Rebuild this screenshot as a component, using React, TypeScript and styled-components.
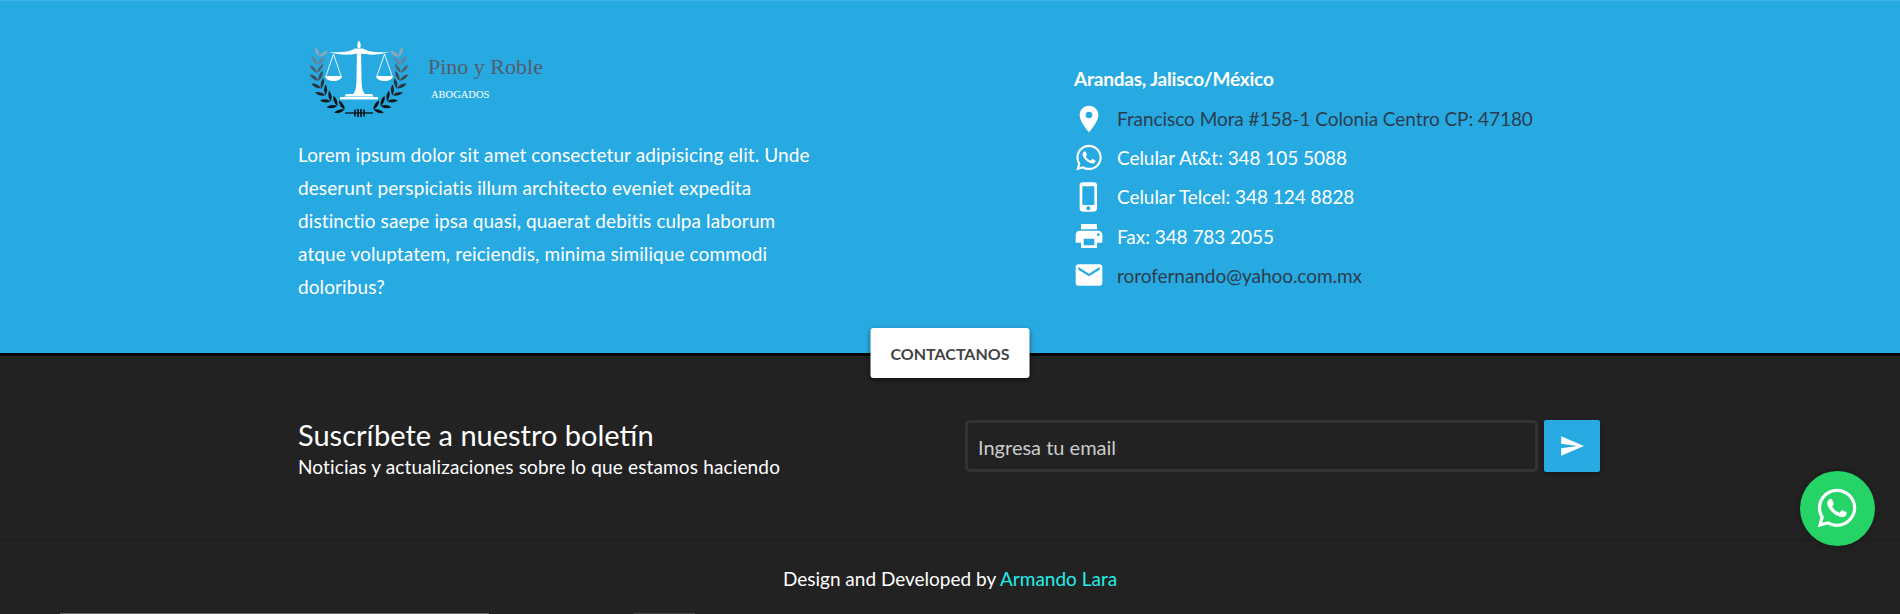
import React from 'react';
import styled, { createGlobalStyle } from 'styled-components';
import { FaWhatsapp } from 'react-icons/fa';
import { MdEmail, MdPhoneIphone, MdPlace, MdPrint, MdSend } from 'react-icons/md';

const GlobalStyle = createGlobalStyle`
  html, body {
    margin: 0;
    height: 100%;
    overflow: hidden;
    background: #222222;
  }
  body {
    font-family: Lato, "Noto Sans", sans-serif;
    font-size: 19px;
  }
  * {
    box-sizing: border-box;
  }
`;

const Page = styled.div`
  height: 614px;
  overflow: hidden;
  position: relative;
`;

const InfoBand = styled.section`
  height: 356px;
  background: #27aae1;
  border-top: 1px solid #3fb4e6;
  border-bottom: 3px solid #000;
  position: relative;
`;

const Container = styled.div`
  width: 1304px;
  margin: 0 auto;
  display: grid;
  grid-template-columns: 775px 1fr;
`;

const AboutCol = styled.div`
  display: flex;
  flex-direction: column;
  padding-top: 38px;
`;

const Logo = styled.div`
  display: flex;
  align-items: flex-start;
  height: 99px;
  padding-left: 11px;
`;

const LogoWords = styled.div`
  display: flex;
  flex-direction: column;
  margin: 14px 0 0 19px;
  font-family: "Liberation Serif", serif;
`;

const LogoName = styled.span`
  font-size: 22px;
  line-height: 28px;
  color: #525d6c;
`;

const LogoTag = styled.span`
  font-size: 10.5px;
  line-height: 12px;
  margin: 8px 0 0 3px;
  color: #fff;
`;

const About = styled.p`
  margin: 0;
  width: 520px;
  font-size: 19px;
  line-height: 33px;
  letter-spacing: 0.1px;
  color: #fff;
`;

const ContactCol = styled.div`
  padding-top: 60px;
`;

const ContactTitle = styled.h4`
  margin: 0 0 0 1px;
  height: 38px;
  font-size: 19px;
  line-height: 36px;
  font-weight: 700;
  letter-spacing: -0.2px;
  color: #fff;
`;

const ContactRow = styled.div<{ $dark?: boolean }>`
  display: flex;
  align-items: center;
  gap: 12px;
  height: 39.2px;
  font-size: 19px;
  letter-spacing: -0.05px;
  color: ${(p) => (p.$dark ? '#2b3d4f' : '#fff')};

  svg {
    flex: 0 0 32px;
    color: #fff;
  }
`;

const SubscribeBand = styled.section`
  height: 185px;
  border-bottom: 1px solid #1c1c1c;
  background: #222222;
`;

const SubscribeInner = styled.div`
  width: 1304px;
  margin: 0 auto;
  display: grid;
  grid-template-columns: 667px 1fr;
  padding-top: 64px;
`;

const SubscribeCopy = styled.div`
  display: flex;
  flex-direction: column;
  margin-top: -2px;
  color: #fff;
`;

const SubscribeTitle = styled.h3`
  margin: 0;
  font-size: 29px;
  line-height: 34px;
  font-weight: 400;
`;

const SubscribeText = styled.span`
  font-size: 19px;
  line-height: 30px;
  letter-spacing: 0.15px;
`;

const SubscribeForm = styled.form`
  display: flex;
  gap: 6px;
`;

const EmailInput = styled.input`
  width: 573px;
  height: 52px;
  padding: 2px 10px 0;
  border: 3px solid #333;
  border-radius: 5px;
  outline: none;
  background: #222222;
  color: #ccc;
  font-family: inherit;
  font-size: 20px;

  &::placeholder {
    color: #ccc;
    opacity: 1;
  }
`;

const SendButton = styled.button`
  display: flex;
  align-items: center;
  justify-content: center;
  width: 56px;
  height: 52px;
  padding: 0;
  border: 0;
  border-radius: 2px;
  background: #27aae1;
  color: #fff;
  box-shadow: 0 2px 4px rgba(0, 0, 0, 0.3);
`;

const Credits = styled.footer`
  height: 72px;
  padding-top: 23px;
  text-align: center;
  font-size: 19px;
  line-height: 30px;
  color: #fff;

  a {
    color: #22eee6;
    text-decoration: none;
  }
`;

const EdgeBar = styled.div`
  display: flex;
  align-items: flex-start;
  gap: 145px;
  padding-left: 60px;
`;

const EdgeLine = styled.span<{ $width: number; $tone: string }>`
  width: ${(p) => p.$width}px;
  height: 2px;
  background: ${(p) => p.$tone};
`;

const ContactButton = styled.a`
  position: absolute;
  left: 50%;
  bottom: -25px;
  transform: translateX(-50%);
  width: 159px;
  height: 50px;
  display: flex;
  align-items: center;
  justify-content: center;
  border-radius: 3px;
  background: #fff;
  color: #444;
  font-size: 16px;
  font-weight: 700;
  box-shadow: 0 2px 5px rgba(0, 0, 0, 0.45);
`;

const WhatsappFab = styled.a`
  position: absolute;
  left: 1799.5px;
  top: 470.5px;
  width: 75px;
  height: 75px;
  display: flex;
  align-items: center;
  justify-content: center;
  border-radius: 50%;
  background: #25d366;
  color: #fff;
  box-shadow: 0 0 6px rgba(0, 0, 0, 0.3);
`;

// leaves of the wreath, from the knot at the bottom up the left side
const leaves = Array.from({ length: 9 }, (_, i) => {
  const deg = 110 + i * 11;
  const angle = (deg * Math.PI) / 180;
  return {
    x: 50 + 42 * Math.cos(angle),
    y: 31 + 42 * Math.sin(angle),
    along: (Math.atan2(Math.cos(angle), -Math.sin(angle)) * 180) / Math.PI,
  };
});

const LEAF = 'M0 0Q5.500-3.200 11 0Q5.500 3.200 0 0z';

function Emblem() {
  return (
    <svg width="100" height="82" viewBox="0 0 100 82" aria-hidden="true">
      {[false, true].map((mirror) => (
        <g key={String(mirror)} transform={mirror ? 'matrix(-1 0 0 1 100 0)' : undefined}>
          {leaves.map((leaf, i) => (
            <g key={i} fill={`hsl(205, ${Math.round(10 + i * 1.5)}%, ${Math.round(6 + i * i * 0.9)}%)`}>
              <path d={LEAF} transform={`translate(${leaf.x} ${leaf.y}) rotate(${leaf.along + 38})`} />
              <path d={LEAF} transform={`translate(${leaf.x} ${leaf.y}) rotate(${leaf.along - 38})`} />
            </g>
          ))}
        </g>
      ))}
      <g fill="none" stroke="#0a1218" strokeWidth="1.3">
        <path d="M36 74h28" />
        <path d="M46 70.500v7M49 70v8M52 70v8M55 70.500v7" strokeWidth="1.600" />
      </g>
      <g fill="#fff">
        <path d="M50 1.500c1.600 2.500 2.200 4.500 1.200 7.500h-2.400c-1-3-.4-5 1.200-7.500z" />
        <path d="M20 13c10 .5 20 .5 26-3.500h8c6 4 16 4 26 3.500-10 3-20 3.500-28 1.500h-4c-8 2-18 1.500-28-1.500z" />
        <path d="M48 12h4l.6 32c.2 5 1 8 3 11H44.400c2-3 2.800-6 3-11z" />
        <path d="M37 55h26l1.500 2.500h-29zM31 58h38v2.500H31z" />
        <path d="M16 37h17c-.6 3.500-4 5-8.500 5S16.600 40.500 16 37z" />
        <path d="M67 37h17c-.6 3.500-4 5-8.500 5S67.600 40.500 67 37z" />
      </g>
      <g fill="none" stroke="#fff" strokeWidth="0.9">
        <path d="M24.500 15L17 37M24.500 15L32 37" />
        <path d="M75.500 15L68 37M75.500 15L83 37" />
      </g>
    </svg>
  );
}

export default function App() {
  return (
    <Page>
      <GlobalStyle />
      <InfoBand>
        <Container>
          <AboutCol>
            <Logo>
              <Emblem />
              <LogoWords>
                <LogoName>Pino y Roble</LogoName>
                <LogoTag>ABOGADOS</LogoTag>
              </LogoWords>
            </Logo>
            <About>
              Lorem ipsum dolor sit amet consectetur adipisicing elit. Unde deserunt perspiciatis illum architecto
              eveniet expedita distinctio saepe ipsa quasi, quaerat debitis culpa laborum atque voluptatem, reiciendis,
              minima similique commodi doloribus?
            </About>
          </AboutCol>
          <ContactCol>
            <ContactTitle>Arandas, Jalisco/México</ContactTitle>
            <ContactRow $dark>
              <MdPlace size={32} />
              Francisco Mora #158-1 Colonia Centro CP: 47180
            </ContactRow>
            <ContactRow>
              <FaWhatsapp size={29} />
              Celular At&amp;t: 348 105 5088
            </ContactRow>
            <ContactRow>
              <MdPhoneIphone size={32} />
              Celular Telcel: 348 124 8828
            </ContactRow>
            <ContactRow>
              <MdPrint size={32} />
              Fax: 348 783 2055
            </ContactRow>
            <ContactRow $dark>
              <MdEmail size={32} />
              rorofernando@yahoo.com.mx
            </ContactRow>
          </ContactCol>
        </Container>
        <ContactButton>CONTACTANOS</ContactButton>
      </InfoBand>
      <SubscribeBand>
        <SubscribeInner>
          <SubscribeCopy>
            <SubscribeTitle>Suscríbete a nuestro boletín</SubscribeTitle>
            <SubscribeText>Noticias y actualizaciones sobre lo que estamos haciendo</SubscribeText>
          </SubscribeCopy>
          <SubscribeForm>
            <EmailInput placeholder="Ingresa tu email" />
            <SendButton type="button">
              <MdSend size={26} />
            </SendButton>
          </SubscribeForm>
        </SubscribeInner>
      </SubscribeBand>
      <Credits>
        Design and Developed by <a href="#">Armando Lara</a>
      </Credits>
      <EdgeBar>
        <EdgeLine $width={429} $tone="#666" />
        <EdgeLine $width={61} $tone="#444" />
      </EdgeBar>
      <WhatsappFab>
        <FaWhatsapp size={44} />
      </WhatsappFab>
    </Page>
  );
}
